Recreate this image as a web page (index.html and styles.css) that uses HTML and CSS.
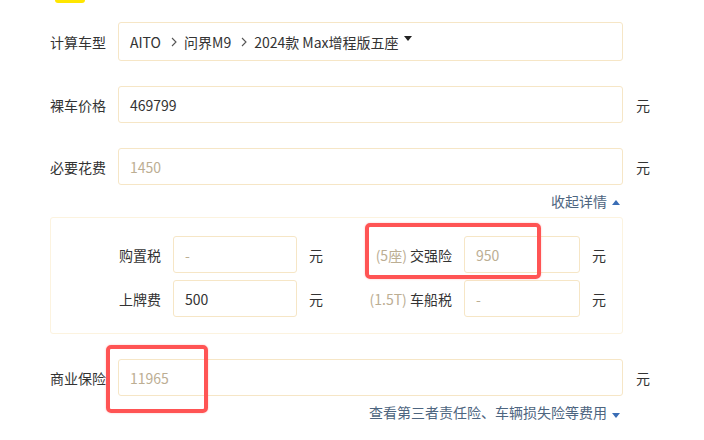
FILE: index.html
```html
<!DOCTYPE html>
<html lang="zh-CN">
<head>
    <meta charset="UTF-8">
    <meta name="viewport" content="width=device-width, initial-scale=1.0">
    <title>购车计算器</title>
    <link rel="stylesheet" href="styles.css">
</head>
<body>
    <div class="tab-mark"></div>
    <div class="calc">
        <div class="row first">
            <span class="label">计算车型</span>
            <div class="box select">
                AITO
                <svg class="chev" width="6" height="10" viewBox="0 0 6 10"><path d="M1 1l4 4-4 4" fill="none" stroke="#555" stroke-width="1.1"/></svg>
                问界M9
                <svg class="chev" width="6" height="10" viewBox="0 0 6 10"><path d="M1 1l4 4-4 4" fill="none" stroke="#555" stroke-width="1.1"/></svg>
                2024款 Max增程版五座<span class="caret down dark"></span>
            </div>
        </div>
        <div class="row">
            <span class="label">裸车价格</span>
            <div class="box">469799</div>
            <span class="unit">元</span>
        </div>
        <div class="row">
            <span class="label">必要花费</span>
            <div class="box muted">1450</div>
            <span class="unit">元</span>
        </div>
        <div class="more">收起详情<span class="caret up"></span></div>

        <div class="detail">
            <div class="sub-row">
                <span class="sub-label left">购置税</span>
                <div class="box small muted">-</div>
                <span class="unit">元</span>
                <span class="sub-label right"><em>(5座)</em> 交强险</span>
                <div class="box small muted">950</div>
                <span class="unit">元</span>
            </div>
            <div class="sub-row">
                <span class="sub-label left">上牌费</span>
                <div class="box small">500</div>
                <span class="unit">元</span>
                <span class="sub-label right"><em>(1.5T)</em> 车船税</span>
                <div class="box small muted">-</div>
                <span class="unit">元</span>
            </div>
        </div>

        <div class="row">
            <span class="label">商业保险</span>
            <div class="box muted">11965</div>
            <span class="unit">元</span>
        </div>
        <div class="more">查看第三者责任险、车辆损失险等费用<span class="caret down"></span></div>
    </div>

    <div class="mark mark-1"></div>
    <div class="mark mark-2"></div>
</body>
</html>
```

FILE: styles.css
```css
body {
    margin: 0;
    background: #fff;
    color: #333;
    font-family: "Noto Sans CJK SC", "Noto Sans", sans-serif;
    font-size: 14px;
    position: relative;
    height: 440px;
    overflow: hidden;
}
.tab-mark {
    margin-left: 55px;
    width: 30px;
    height: 3px;
    background: #ffe600;
    border-radius: 0 0 3px 3px;
}
.calc {
    padding-left: 50px;
    width: 573px;
}
.row {
    display: flex;
    align-items: center;
    height: 37px;
    margin-top: 25px;
    position: relative;
}
.row.first {
    margin-top: 19px;
    height: 39px;
}
.label {
    width: 68px;
    flex: none;
    white-space: nowrap;
}
.box {
    box-sizing: border-box;
    height: 100%;
    width: 505px;
    flex: none;
    border: 1px solid #f6e6c6;
    border-radius: 3px;
    padding-left: 11px;
    display: flex;
    align-items: center;
    color: #333;
    white-space: nowrap;
}
.box.muted {
    color: #bcae93;
}
.select .chev {
    margin: 0 7px 0 10px;
}
.unit {
    position: absolute;
    left: 586px;
    white-space: nowrap;
}
.sub-row .unit {
    position: static;
    width: 14px;
    margin-left: 12px;
}
.caret {
    display: inline-block;
    width: 0;
    height: 0;
    border-left: 4px solid transparent;
    border-right: 4px solid transparent;
    margin-left: 5px;
}
.caret.down {
    border-top: 5px solid #3a6db5;
}
.caret.up {
    border-bottom: 5px solid #3a6db5;
    position: relative;
    top: -2px;
}
.caret.dark {
    border-top-color: #222;
    margin-left: 5px;
    position: relative;
    top: -3px;
}
.more {
    text-align: right;
    color: #4d6580;
    padding-right: 3px;
    height: 16px;
    line-height: 16px;
    margin-top: 8px;
}
.detail {
    margin-top: 8px;
    border: 1px solid #fcf3df;
    border-radius: 3px;
    padding: 18px 0 16px;
    width: 571px;
}
.sub-row {
    display: flex;
    align-items: center;
    height: 37px;
}
.sub-row + .sub-row {
    margin-top: 7px;
}
.sub-label {
    flex: none;
    text-align: right;
    white-space: nowrap;
}
.sub-label.left {
    width: 110px;
    margin-right: 12px;
}
.sub-label.right {
    width: 129px;
    margin-right: 12px;
}
.sub-label em {
    font-style: normal;
    color: #bcae93;
}
.box.small {
    width: 124px;
}
.sub-row .box.small:last-of-type {
    width: 116px;
}
.mark {
    position: absolute;
    border: 4px solid #ff5454;
    border-radius: 5px;
    box-sizing: border-box;
    box-shadow: 0 0 2px rgba(255, 84, 84, 0.4);
}
.mark-1 {
    left: 365px;
    top: 223px;
    width: 176px;
    height: 56px;
}
.mark-2 {
    left: 106px;
    top: 345px;
    width: 102px;
    height: 68px;
}
```
